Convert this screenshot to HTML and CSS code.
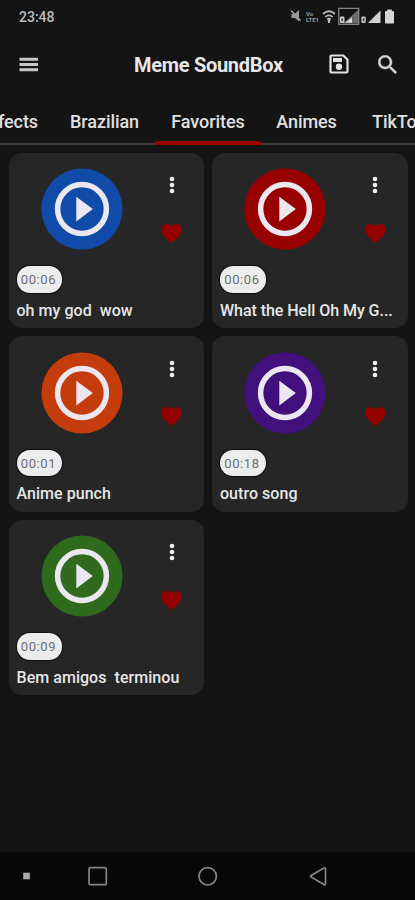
FILE: index.html
```html
<!DOCTYPE html>
<html lang="en">
<head>
<meta charset="utf-8">
<title>Meme SoundBox</title>
<link rel="stylesheet" href="styles.css">
</head>
<body>
<svg class="defs" width="0" height="0">
  <symbol id="play" viewBox="0 0 82 82">
    <circle cx="41" cy="41" r="40.6" fill="currentColor"/>
    <circle cx="41" cy="41" r="24.4" fill="none" stroke="#ebe6ef" stroke-width="5.5"/>
    <path d="M35.3 28.7v24.7l16.5-12.3z" fill="#ebe6ef"/>
  </symbol>
  <symbol id="dots" viewBox="0 0 6 18">
    <circle cx="3" cy="3" r="2.3"/><circle cx="3" cy="9" r="2.3"/><circle cx="3" cy="15" r="2.3"/>
  </symbol>
  <symbol id="heart" viewBox="0 0 23 23">
    <path d="M11.5 21.2C7 17 1.200 12.600 1.200 7.700C1.200 4.400 3.600 2 6.700 2C8.700 2 10.500 3 11.500 4.400C12.500 3 14.300 2 16.300 2C19.400 2 21.800 4.400 21.800 7.700C21.800 12.600 16 17 11.500 21.200z"/>
  </symbol>
</svg>
<div class="screen">
  <div class="status">
    <span class="clock">23:48</span>
    <svg class="status-icons" width="108" height="20" viewBox="0 0 108 20">
      <g fill="none" stroke="#aaa" stroke-width="1.3">
        <path d="M1 3.5l9.500 10"/>
        <path d="M33 7q6-5.500 12 0M35.300 9.800q3.700-3 7.400 0" stroke="#b8b8b8" stroke-width="1.7"/>
        <path d="M48.800 1.300h19.900v16H48.800z" stroke="#858585"/>
      </g>
      <path d="M1.500 7h3l4.500-4v11.500L5 11H1.500z" fill="#999"/>
      <path d="M36.700 11.700q2.300-1.700 4.600 0l-1.200 1.800V16h-2.200v-2.500z" fill="#b8b8b8"/>
      <path d="M53 16.500L68 3v13.500z" fill="#6b6b6b"/>
      <path d="M55.500 15.800l6.500-5.500v5.500z" fill="#dedede"/>
      <path d="M78 16L90.500 3.500V16z" fill="#d2d2d2"/>
      <rect x="50" y="9.500" width="4.500" height="6.500" rx="1.300" fill="#ccc"/>
      <rect x="71.300" y="9.500" width="4.500" height="6.500" rx="1.300" fill="#bbb"/>
      <path d="M51.500 11.500h1.500v2.500h-1.500zM73 11.500h1.300v2.500H73z" fill="#333"/>
      <path d="M97.300 2.500h4.500V4h1.200q1 0 1 1v10.500q0 1-1 1h-7q-1 0-1-1V5q0-1 1-1h1.300z" fill="#d5d5d5"/>
      <text x="16" y="8.500" class="volte">Vo</text>
      <text x="16" y="15" class="volte" textLength="13" lengthAdjust="spacingAndGlyphs">LTE1</text>
    </svg>
  </div>
  <header class="appbar">
    <svg class="menu" width="20" height="16" viewBox="0 0 20 16"><path d="M.5 2.300h18.500M.5 7.500h18.500M.5 12.700h18.500" stroke="#c7c7c7" stroke-width="2.900"/></svg>
    <h1>Meme SoundBox</h1>
    <svg class="save" width="20" height="20" viewBox="0 0 20 20">
      <path d="M2.700 1.500h11.700l4.100 4.100v11.700q0 1.200-1.200 1.200H2.700q-1.200 0-1.200-1.200V2.700q0-1.200 1.200-1.200z" fill="none" stroke="#e2e2e2" stroke-width="2.200"/>
      <path d="M4 4h9v4H4z" fill="#e2e2e2"/><circle cx="10" cy="12.800" r="3.200" fill="#e2e2e2"/>
    </svg>
    <svg class="search" width="19" height="19" viewBox="2.800 2.800 17.900 17.900"><path fill="#d8d8d8" stroke="#d8d8d8" stroke-width=".4" d="M15.500 14h-.79l-.28-.27C15.410 12.590 16 11.110 16 9.500 16 5.910 13.090 3 9.500 3S3 5.910 3 9.500 5.910 16 9.500 16c1.610 0 3.090-.59 4.230-1.570l.27.28v.79l5 4.990L20.490 19l-4.990-5zm-6 0C7.010 14 5 11.990 5 9.500S7.010 5 9.500 5 14 7.010 14 9.500 11.990 14 9.500 14z"/></svg>
  </header>
  <nav class="tabs">
    <div class="tab effects">Effects</div>
    <div class="tab brazilian">Brazilian</div>
    <div class="tab favorites active">Favorites</div>
    <div class="tab animes">Animes</div>
    <div class="tab tiktok">TikTok</div>
  </nav>
  <main class="grid">
    <article class="card">
      <div class="top"><svg class="play blue"><use href="#play"/></svg><div class="actions"><svg class="dots"><use href="#dots"/></svg><svg class="heart"><use href="#heart"/></svg></div></div>
      <span class="time">00:06</span><p class="name">oh my god&nbsp; wow</p>
    </article>
    <article class="card">
      <div class="top"><svg class="play red"><use href="#play"/></svg><div class="actions"><svg class="dots"><use href="#dots"/></svg><svg class="heart"><use href="#heart"/></svg></div></div>
      <span class="time">00:06</span><p class="name long">What the Hell Oh My G...</p>
    </article>
    <article class="card">
      <div class="top"><svg class="play orange"><use href="#play"/></svg><div class="actions"><svg class="dots"><use href="#dots"/></svg><svg class="heart"><use href="#heart"/></svg></div></div>
      <span class="time">00:01</span><p class="name">Anime punch</p>
    </article>
    <article class="card">
      <div class="top"><svg class="play purple"><use href="#play"/></svg><div class="actions"><svg class="dots"><use href="#dots"/></svg><svg class="heart"><use href="#heart"/></svg></div></div>
      <span class="time">00:18</span><p class="name">outro song</p>
    </article>
    <article class="card">
      <div class="top"><svg class="play green"><use href="#play"/></svg><div class="actions"><svg class="dots"><use href="#dots"/></svg><svg class="heart"><use href="#heart"/></svg></div></div>
      <span class="time">00:09</span><p class="name">Bem amigos&nbsp; terminou</p>
    </article>
  </main>
  <footer class="navbar">
    <svg width="415" height="48" viewBox="0 0 415 48" fill="none" stroke="#858585" stroke-width="1.700">
      <rect x="23.200" y="20.700" width="6.600" height="6.600" fill="#aaa" stroke="none"/>
      <rect x="89" y="15.700" width="17.300" height="17" rx="1.800"/>
      <circle cx="207.700" cy="24.300" r="8.700"/>
      <path d="M324 16q1.500-.8 1.500 1v14.600q0 1.800-1.500 1l-12.900-7.500q-1.300-.8 0-1.600z"/>
    </svg>
  </footer>
</div>
</body>
</html>
```
FILE: styles.css
```css
* { box-sizing: border-box; }
body { margin: 0; background: #141414; font-family: Roboto, sans-serif; color: #e6e6e6; }
.defs { display: block; position: absolute; }
.screen { width: 415px; height: 900px; display: flex; flex-direction: column; overflow: hidden; background: #141414; }
.status { height: 34px; padding: 7px 17px 0 19px; display: flex; justify-content: space-between; }
.clock { font-size: 14px; line-height: 20px; font-weight: 500; color: #bcbcbc; }
.status-icons { display: block; }
.volte { font-size: 6px; font-weight: 700; fill: #999; }
.appbar { height: 62px; display: flex; align-items: center; padding: 0 18px 2px 19px; }
.menu { margin-top: 1px; }
h1 { margin: 2px 0 0 95px; width: 195px; font-size: 20px; line-height: 24px; font-weight: 700; letter-spacing: -0.3px; white-space: nowrap; }
.search { margin-left: 29px; }
.tabs { height: 49px; display: flex; border-bottom: 2px solid #3c3c3c; margin-bottom: 8px; }
.tab { flex: none; height: 49px; padding-top: 14px; text-align: center; font-size: 18px; line-height: 24px; font-weight: 500; letter-spacing: -.08px; white-space: nowrap; color: #e0e0e0; }
.effects { width: 90px; margin-left: -36px; text-align: right; padding-right: 16px; }
.brazilian { width: 101px; }
.favorites { width: 106px; }
.animes { width: 91px; }
.tiktok { width: 94px; }
.active { border-bottom: 4px solid #980000; }
.grid { display: grid; grid-template-columns: 195.5px 195.5px; grid-auto-rows: 175.4px; gap: 8px; padding-left: 8.5px; flex: 1; }
.card { background: #262626; border-radius: 13px; padding: 15.3px 8px 0; display: flex; flex-direction: column; }
.top { display: flex; padding-left: 24px; height: 98px; }
.play { width: 82px; height: 82px; }
.actions { margin-left: 37.5px; padding-top: 8px; display: flex; flex-direction: column; align-items: center; }
.dots { width: 6px; height: 18px; fill: #eee; }
.heart { width: 23px; height: 23px; margin-top: 27.7px; fill: #940000; }
.blue { color: #104ba9; }
.red { color: #980000; }
.orange { color: #c43c0c; }
.purple { color: #41107d; }
.green { color: #306b1d; }
.time { align-self: flex-start; width: 45.5px; height: 26.5px; padding-right: 1.5px; border-radius: 13px; background: #ececec; box-shadow: 0 0 1px 1px #111; color: #6e6e6e; font-size: 13px; line-height: 27px; letter-spacing: .6px; text-align: center; }
.name { margin: 7px 0 0; font-size: 16px; line-height: 22px; font-weight: 500; letter-spacing: .04px; white-space: nowrap; color: #e6e6e6; }
.long { letter-spacing: -.04px; }
.navbar { height: 48px; background: #080808; }
.navbar svg { display: block; }
```
